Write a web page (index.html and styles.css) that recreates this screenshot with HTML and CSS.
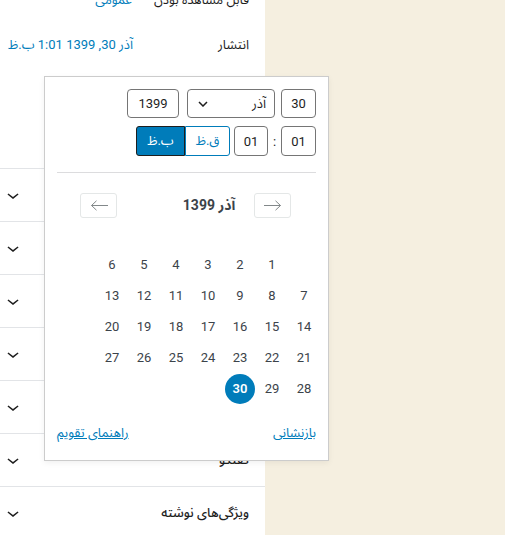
FILE: index.html
```html
<!DOCTYPE html>
<html lang="fa" dir="rtl">
<head>
<meta charset="utf-8">
<title>ویرایش نوشته</title>
<link rel="stylesheet" href="styles.css">
</head>
<body>
<div class="layout">
  <main class="canvas"></main>
  <aside class="sidebar">
    <section class="status">
      <div class="row row-visibility"><span class="label">قابل مشاهده بودن</span><a class="value">عمومی</a></div>
      <div class="row row-publish"><span class="label">انتشار</span><a class="value value-date">آذر 30, 1399 1:01 ب.ظ</a></div>
    </section>
    <section class="panel"><span class="panel-title">پیوند یکتا</span><svg class="chev" width="24" height="24" viewBox="0 0 24 24"><path d="M17.5 11.6L12 16l-5.5-4.4.9-1.2L12 14l4.6-3.6 1 1.2z"/></svg></section>
    <section class="panel"><span class="panel-title">دسته‌ها</span><svg class="chev" width="24" height="24" viewBox="0 0 24 24"><path d="M17.5 11.6L12 16l-5.5-4.4.9-1.2L12 14l4.6-3.6 1 1.2z"/></svg></section>
    <section class="panel"><span class="panel-title">برچسب‌ها</span><svg class="chev" width="24" height="24" viewBox="0 0 24 24"><path d="M17.5 11.6L12 16l-5.5-4.4.9-1.2L12 14l4.6-3.6 1 1.2z"/></svg></section>
    <section class="panel"><span class="panel-title">تصویر شاخص</span><svg class="chev" width="24" height="24" viewBox="0 0 24 24"><path d="M17.5 11.6L12 16l-5.5-4.4.9-1.2L12 14l4.6-3.6 1 1.2z"/></svg></section>
    <section class="panel"><span class="panel-title">چکیده</span><svg class="chev" width="24" height="24" viewBox="0 0 24 24"><path d="M17.5 11.6L12 16l-5.5-4.4.9-1.2L12 14l4.6-3.6 1 1.2z"/></svg></section>
    <section class="panel"><span class="panel-title">گفتگو</span><svg class="chev" width="24" height="24" viewBox="0 0 24 24"><path d="M17.5 11.6L12 16l-5.5-4.4.9-1.2L12 14l4.6-3.6 1 1.2z"/></svg></section>
    <section class="panel"><span class="panel-title">ویژگی‌های نوشته</span><svg class="chev" width="24" height="24" viewBox="0 0 24 24"><path d="M17.5 11.6L12 16l-5.5-4.4.9-1.2L12 14l4.6-3.6 1 1.2z"/></svg></section>

    <div class="popover">
      <div class="dt-row">
        <div class="field f-day">30</div>
        <div class="field f-month"><span>آذر</span><svg width="10" height="6" viewBox="0 0 10 6"><path d="M1 1l4 4 4-4" fill="none" stroke="#1e1e1e" stroke-width="1.5"/></svg></div>
        <div class="field f-year">1399</div>
      </div>
      <div class="dt-row time-row">
        <div class="field f-hour">01</div>
        <span class="colon">:</span>
        <div class="field f-min">01</div>
        <div class="ampm"><span class="ampm-btn am">ق.ظ</span><span class="ampm-btn pm">ب.ظ</span></div>
      </div>
      <div class="sep"></div>
      <div class="cal-nav">
        <span class="nav-btn"><svg width="18" height="11" viewBox="0 0 18 11"><path d="M0 5.5h16.5M11.5 0.8l5 4.7-5 4.7" fill="none" stroke="#82888a" stroke-width="1"/></svg></span>
        <span class="caption">آذر 1399</span>
        <span class="nav-btn"><svg width="18" height="11" viewBox="0 0 18 11"><path d="M18 5.5H1.5M6.5 0.8l-5 4.7 5 4.7" fill="none" stroke="#82888a" stroke-width="1"/></svg></span>
      </div>
      <div class="days">
        <span></span><span>1</span><span>2</span><span>3</span><span>4</span><span>5</span><span>6</span>
        <span>7</span><span>8</span><span>9</span><span>10</span><span>11</span><span>12</span><span>13</span>
        <span>14</span><span>15</span><span>16</span><span>17</span><span>18</span><span>19</span><span>20</span>
        <span>21</span><span>22</span><span>23</span><span>24</span><span>25</span><span>26</span><span>27</span>
        <span>28</span><span>29</span><span class="selected">30</span>
      </div>
      <div class="pop-footer"><a class="link">بازنشانی</a><a class="link">راهنمای تقویم</a></div>
    </div>
  </aside>
</div>
</body>
</html>
```

FILE: styles.css
```css
* { box-sizing: border-box; }
html, body { margin: 0; padding: 0; }
body {
  font-family: Roboto, "Noto Sans Arabic", "Noto Sans Arabic UI", sans-serif;
  font-size: 13px;
  color: #1e1e1e;
  background: #f5efe0;
  height: 535px;
  overflow: hidden;
}
.layout {
  display: flex;
  height: 535px;
}
.canvas {
  flex: 1;
  background: #f5efe0;
}
.sidebar {
  position: relative;
  width: 265px;
  flex: none;
  background: #fff;
}
.status {
  display: flex;
  flex-direction: column;
  height: 169px;
  padding: 0 16px 0 8px;
  border-bottom: 1px solid #e2e4e7;
}
.row {
  display: flex;
  align-items: center;
  height: 30px;
}
.row-visibility { margin-top: -15px; }
.row-publish { margin-top: 15px; }
.value { color: #007cba; }
.row-visibility .value { margin-right: 22px; }
.row-publish .value { margin-right: auto; }
.panel {
  display: flex;
  align-items: center;
  justify-content: space-between;
  height: 53px;
  padding: 0 16px 0 1px;
  border-bottom: 1px solid #e2e4e7;
}
.panel-title { font-weight: 500; color: #1e1e1e; }
.chev { fill: #1e1e1e; }

.popover {
  position: absolute;
  top: 76px;
  left: 44px;
  width: 285px;
  height: 385px;
  z-index: 5;
  background: #fff;
  border: 1px solid #ccc;
  box-shadow: 0 2px 6px rgba(0,0,0,0.06);
  padding: 12px 12px 0;
}
.dt-row {
  display: flex;
  align-items: stretch;
  height: 29px;
}
.time-row { height: 30px; margin-top: 8px; }
.field {
  display: flex;
  align-items: center;
  justify-content: center;
  border: 1px solid #757575;
  border-radius: 4px;
  font-size: 13px;
  color: #1e1e1e;
}
.f-day { width: 35px; }
.f-month {
  width: 88px;
  margin-right: 6px;
  justify-content: space-between;
  padding: 0 8px 0 10px;
}
.f-year { width: 52px; margin-right: 8px; }
.f-hour { width: 35px; }
.colon {
  width: 13px;
  display: flex;
  align-items: center;
  justify-content: center;
}
.f-min { width: 34px; }
.ampm { display: flex; margin-right: 4px; }
.ampm-btn {
  display: flex;
  align-items: center;
  justify-content: center;
  font-size: 13px;
}
.am {
  width: 45px;
  color: #007cba;
  border: 1px solid #007cba;
  border-radius: 0 3px 3px 0;
}
.pm {
  width: 49px;
  color: #fff;
  background: #007cba;
  border: 1px solid #1e1e1e;
  border-radius: 3px 0 0 3px;
}
.sep {
  height: 1px;
  background: #dcdcde;
  margin: 16px 0 20px;
}
.cal-nav {
  display: flex;
  height: 25px;
  padding: 0 25px 0 23px;
}
.nav-btn {
  width: 37px;
  display: flex;
  align-items: center;
  justify-content: center;
  border: 1px solid #e4e7e7;
  border-radius: 3px;
}
.caption {
  flex: 1;
  display: flex;
  align-items: center;
  justify-content: center;
  padding-left: 47px;
  font-weight: 700;
  font-size: 14px;
  color: #3c434a;
}
.days {
  display: grid;
  grid-template-columns: repeat(7, 32px);
  grid-auto-rows: 31px;
  width: 224px;
  margin: 31px -4px 0 auto;
}
.days span {
  display: flex;
  align-items: center;
  justify-content: center;
  color: #3c434a;
  font-size: 13px;
}
.days .selected {
  width: 30px;
  height: 30px;
  margin: 0 auto;
  align-self: center;
  border-radius: 50%;
  background: #007cba;
  color: #fff;
  font-weight: 600;
}
.pop-footer {
  display: flex;
  justify-content: space-between;
  margin-top: 20px;
  line-height: 18px;
}
.link {
  color: #007cba;
  text-decoration: underline;
}
```
